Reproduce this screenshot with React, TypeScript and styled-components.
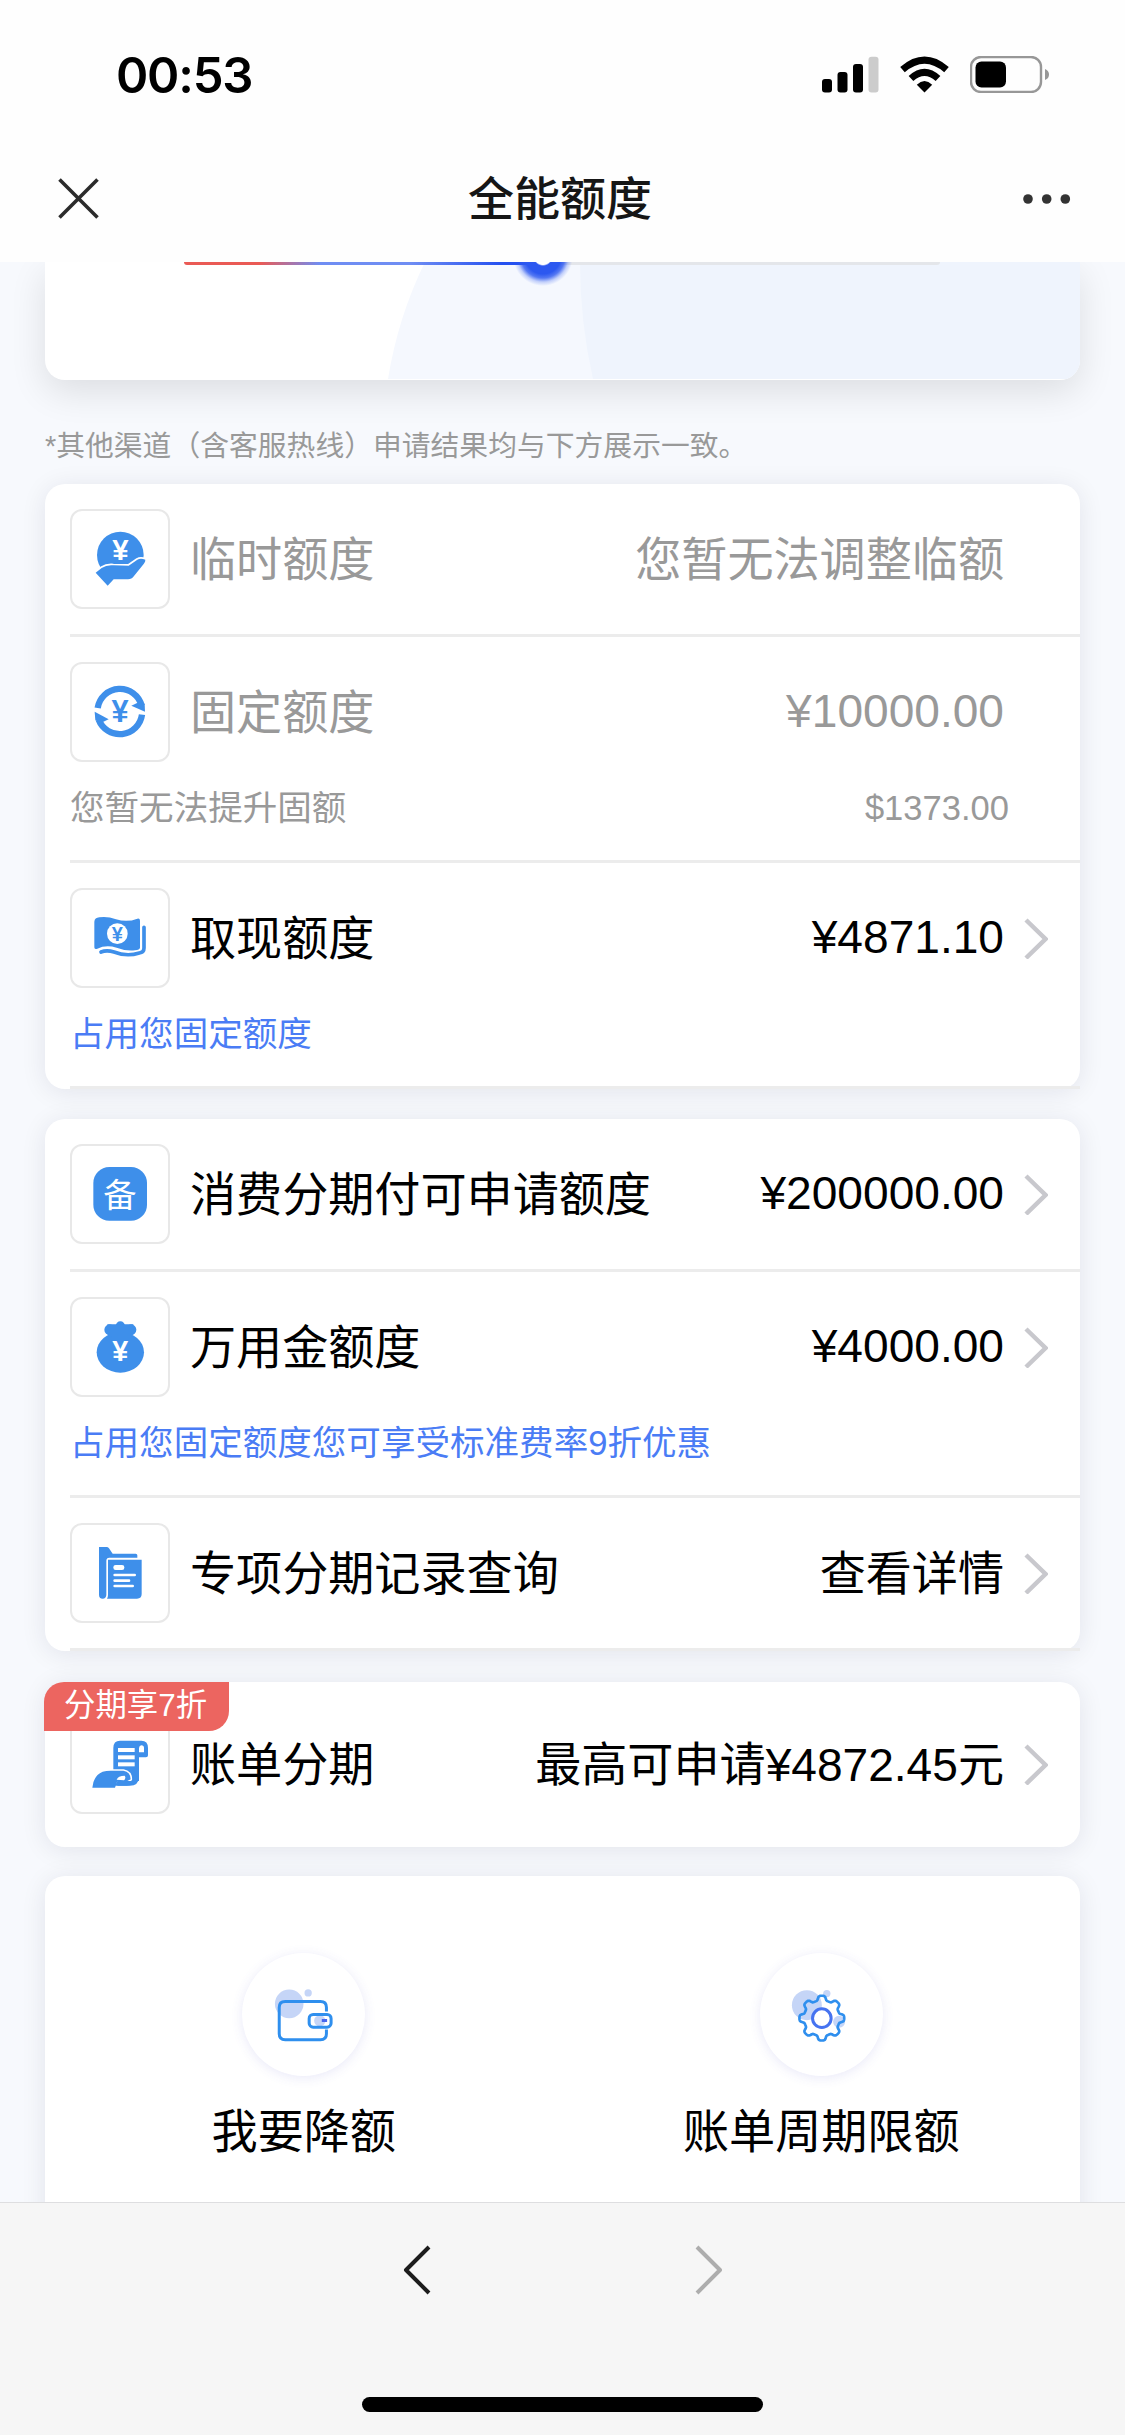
import React from "react";
import styled, { createGlobalStyle } from "styled-components";

const BLUE = "#3e8fea";
const FONT = `"Liberation Sans", "Noto Sans CJK SC", sans-serif`;
const CJK = `"Noto Sans CJK SC", sans-serif`;

const GlobalStyle = createGlobalStyle`
  * { box-sizing: border-box; }
  body { margin: 0; background: #f7f8fc; }
  svg { display: block; flex: none; }
`;

const Screen = styled.div`
  display: flex;
  flex-direction: column;
  width: 1125px;
  height: 2435px;
  overflow: hidden;
  background: #f7f9fd;
  font-family: ${FONT};
  color: #000;
`;

const StatusBar = styled.header`
  flex: none;
  display: flex;
  justify-content: space-between;
  height: 132px;
  padding: 44px 75px 0 116px;
  background: #fefefe;
`;

const Clock = styled.time`
  font: 600 49px/63px Inter, sans-serif;
  letter-spacing: -1.2px;
`;

const StatusIcons = styled.div`
  display: flex;
  gap: 21px;
  padding-top: 12px;
`;

const NavBar = styled.nav`
  flex: none;
  display: flex;
  justify-content: space-between;
  align-items: center;
  height: 130px;
  padding: 3px 54px 0 58px;
  background: #fefefe;
`;

const Title = styled.h1`
  margin: -7px 0 0 -2px;
  font: 500 46px/64px ${CJK};
  color: #161616;
`;

const Content = styled.main`
  flex: 1;
  min-height: 0;
  overflow: hidden;
  padding: 0 45px;
`;

const Hero = styled.section`
  position: relative;
  height: 118px;
  border-radius: 0 0 20px 20px;
  background: #fff;
  box-shadow: 0 12px 36px rgba(0, 0, 0, 0.11);
`;

const HeroArt = styled.svg`
  border-radius: 0 0 20px 20px;
`;

const Track = styled.div`
  position: absolute;
  top: 0;
  left: 139px;
  width: 756px;
  height: 3px;
  border-radius: 0 0 3px 3px;
  background: linear-gradient(90deg, #ea5a55 0 10%, #6f8df3 18% 30%, #2450f0 42% 48%, #e4e6ea 48%);
`;

const ThumbClip = styled.div`
  position: absolute;
  top: 0;
  left: 458px;
  width: 80px;
  height: 40px;
  overflow: hidden;
`;

const Thumb = styled.div`
  width: 62px;
  height: 62px;
  margin: -37px auto 0;
  border-radius: 50%;
  background: radial-gradient(circle at 50% 50%, #fff 0 8.5px, #2c58f0 10px 18px, rgba(44, 88, 240, 0.8) 22px, rgba(44, 88, 240, 0.25) 26px, rgba(44, 88, 240, 0) 30px);
`;

const Note = styled.p`
  margin: 44px 0 16px;
  height: 44px;
  font-size: 28.8px;
  line-height: 45px;
  color: #999;
  white-space: nowrap;
`;

const Card = styled.section`
  position: relative;
  margin-bottom: 30px;
  border-radius: 20px;
  background: #fff;
  box-shadow: 0 3px 26px rgba(20, 20, 50, 0.09);
`;

const Item = styled.div<{ $muted?: boolean }>`
  margin-left: 25px;
  padding-top: 25px;
  border-bottom: 3px solid #ececec;
  color: ${(p) => (p.$muted ? "#999" : "#000")};
`;

const ItemMain = styled.div`
  display: flex;
  align-items: center;
  height: 100px;
  margin-bottom: 25px;
  padding-right: 32px;
  font-size: 46.1px;
  white-space: nowrap;
`;

const IconTile = styled.div`
  flex: none;
  width: 100px;
  height: 100px;
  margin-right: 20px;
  border: 2px solid #e8e8e8;
  border-radius: 12px;
`;

const TileArt = styled.svg`
  width: 100px;
  height: 100px;
  margin: -2px;
  fill: ${BLUE};
`;

const Label = styled.span`
  flex: 1;
  line-height: 64px;
  padding-top: 2px;
`;

const Value = styled.span<{ $lift?: boolean }>`
  line-height: 64px;
  padding: ${(p) => (p.$lift ? "0 1px 3px 0" : "2px 1px 0 0")};
`;

const ChevronSlot = styled.span`
  display: flex;
  justify-content: flex-end;
  width: 43px;
`;

const ItemSub = styled.div<{ $link?: boolean }>`
  display: flex;
  justify-content: space-between;
  height: 48px;
  margin: -4px 0 29px;
  padding-right: 71px;
  font-size: 34.55px;
  line-height: 50px;
  color: ${(p) => (p.$link ? "#4a7cf5" : "#999")};
`;

const BillCard = styled(Card)`
  height: 165px;
  margin: 31px 0 29px;
  padding: 32px 0 0 25px;
`;

const Badge = styled.span`
  position: absolute;
  top: 0;
  left: -1px;
  width: 185px;
  height: 49px;
  padding-left: 20px;
  border-radius: 20px 0 20px 0;
  background: #ec6560;
  color: #fff;
  font: 400 31.4px/48px ${FONT};
`;

const Shortcuts = styled(Card)`
  display: grid;
  grid-template-columns: 1fr 1fr;
  height: 400px;
  padding-top: 77px;
`;

const Shortcut = styled.div`
  display: flex;
  flex-direction: column;
  align-items: center;
  font-size: 46.1px;
  line-height: 64px;
`;

const Disc = styled.div`
  width: 123px;
  height: 123px;
  margin-bottom: 24px;
  border-radius: 50%;
  background: #fff;
  box-shadow: 0 2px 12px rgba(70, 70, 200, 0.12);
`;

const Footer = styled.footer`
  flex: none;
  display: flex;
  flex-direction: column;
  align-items: center;
  height: 233px;
  padding-top: 41px;
  border-top: 1px solid #dedee0;
  background: #f6f6f6;
`;

const Pager = styled.div`
  display: flex;
  justify-content: space-between;
  width: 320px;
`;

const HomeBar = styled.div`
  width: 401px;
  height: 15px;
  margin-top: 101px;
  border-radius: 8px;
  background: #000;
`;

type YenProps = { x: number; y: number; size: number; color: string; weight?: number };
const Yen = ({ x, y, size, color, weight = 700 }: YenProps) => (
  <text x={x} y={y} fontSize={size} fontWeight={weight} fill={color} textAnchor="middle" fontFamily="Liberation Sans">
    ¥
  </text>
);

const HandCoinIcon = () => (
  <TileArt viewBox="60 57 300 300">
    <circle cx="211" cy="195" r="70" />
    <path
      d="M137 248 L155 234 Q170 224 190 226 L236 227 L262 209 Q272 203 286 209 Q287 214 281 222 L252 258 Q245 268 234 268 H191 L173 287 Z"
      stroke="#fff"
      strokeWidth="10"
      strokeLinejoin="round"
      paintOrder="stroke"
    />
    <Yen x={211} y={210} size={88} color="#fff" />
  </TileArt>
);

const CycleIcon = () => (
  <TileArt viewBox="60 515 300 300">
    <g fill="none" stroke={BLUE} strokeWidth="19">
      <path d="M143 653 A67.5 67.5 0 0 1 275 646" />
      <path d="M276 673 A67.5 67.5 0 0 1 146 688" />
    </g>
    <path d="M244 646 L266 636 L284 640 L285 664 Z" />
    <path d="M176 687 L154 697 L136 690 L134 664 Z" />
    <Yen x={210} y={696} size={92} color={BLUE} />
  </TileArt>
);

const CashIcon = () => (
  <TileArt viewBox="60 85 300 300">
    <path d="M133 186 Q134 174 148 173 Q172 169 198 179 Q232 189 262 177 Q270 175 270 183 V264 Q269 270 255 272 Q228 275 200 264 Q168 254 142 267 Q133 271 133 263 Z" />
    <path
      d="M282 203 V265 Q282 278 268 280 Q230 292 192 277 Q170 270 153 277"
      fill="none"
      stroke={BLUE}
      strokeWidth="11"
      strokeLinecap="round"
    />
    <circle cx="202" cy="222" r="31" fill="#fff" />
    <Yen x={202} y={243} size={60} color={BLUE} />
  </TileArt>
);

const ReserveIcon = () => (
  <TileArt viewBox="60 850 300 300">
    <rect x="130" y="919" width="161" height="161" rx="48" />
    <text x="210" y="1038" fontSize="100" fontWeight="400" fill="#fff" textAnchor="middle" fontFamily="Noto Sans CJK SC">
      备
    </text>
  </TileArt>
);

const PurseIcon = () => (
  <TileArt viewBox="60 52 300 300">
    <ellipse cx="211" cy="218" rx="71" ry="61" />
    <circle cx="179" cy="150" r="16" />
    <circle cx="211" cy="139" r="14" />
    <circle cx="243" cy="150" r="16" />
    <path d="M172 134 H250 V164 L240 172 L262 190 H160 L184 172 L172 164 Z" />
    <Yen x={211} y={245} size={86} color="#fff" />
  </TileArt>
);

const FolderIcon = () => (
  <TileArt viewBox="60 730 300 300">
    <path d="M147 802 H170 Q174 802 177 806 L188 822 H257 Q262 822 262 827 V834 H178 Q169 834 169 843 V946 Q168 957 158 957 Q147 957 147 945 Z" />
    <path d="M174 840 H275 V943 Q275 957 261 957 H171 Q174 952 174 946 Z" />
    <g fill="#fff">
      <rect x="190" y="856" width="33" height="15" rx="7" />
      <rect x="190" y="882" width="68" height="8" rx="4" />
      <rect x="190" y="899" width="51" height="8" rx="4" />
      <rect x="190" y="915" width="62" height="8" rx="4" />
    </g>
  </TileArt>
);

const BillIcon = () => (
  <TileArt viewBox="120 160 300 300">
    <path d="M270 240 H334 Q354 240 354 262 V284 Q354 290 348 290 H327 V348 Q327 375 300 375 H250 V262 Q250 240 270 240 Z" />
    <g fill="#fff">
      <rect x="264" y="262" width="50" height="12" />
      <rect x="264" y="284" width="50" height="12" />
      <rect x="264" y="305" width="50" height="12" />
      <path d="M327 275 V262 Q328 254 334 254 Q342 254 342 262 V275 Z" />
    </g>
    <path
      d="M187 381 Q190 345 218 333 Q228 330 242 330 H280 Q302 334 302 356 L292 361 H262 L255 381 Z"
      stroke="#fff"
      strokeWidth="9"
      strokeLinejoin="round"
      paintOrder="stroke"
    />
    <path d="M285 361 H327 V348 L310 344 Q312 375 290 375 H255 L262 361 Z" />
    <path d="M260 357 Q264 345 284 345 Q289 352 282 359 Z" fill="#fff" />
  </TileArt>
);

const WalletIcon = () => (
  <svg width="123" height="123" viewBox="37 40 370 370" fill="none" stroke="#2f8fee" strokeWidth="9">
    <g fill="#c5d5f7" stroke="none">
      <circle cx="179" cy="193" r="43" />
      <circle cx="236" cy="160" r="11" />
      <circle cx="271" cy="244" r="17" />
    </g>
    <path d="M291 216 V204 Q291 186 273 186 H167 Q149 186 149 204 V283 Q149 301 167 301 H273 Q291 301 291 283 V270" />
    <rect x="239" y="225" width="66" height="38" rx="12" />
    <path d="M277 243 H293" stroke="#4767ee" />
  </svg>
);

const gearPath =
  Array.from({ length: 181 }, (_, i) => {
    const a = (i * Math.PI) / 90;
    const r = 60.5 + 7 * Math.tanh(2.2 * Math.cos(8 * a));
    return `${i ? "L" : "M"}${(232 + r * Math.sin(a)).toFixed(1)} ${(236 - r * Math.cos(a)).toFixed(1)}`;
  }).join(" ") + "Z";

const GearIcon = () => (
  <svg width="123" height="123" viewBox="46 40 370 370" fill="none" stroke="#2f8fee" strokeWidth="8">
    <g fill="#c5d5f7" stroke="none">
      <circle cx="187" cy="197" r="45" />
      <circle cx="247" cy="162" r="11" />
      <circle cx="284" cy="247" r="18" />
    </g>
    <path d={gearPath} strokeLinejoin="round" />
    <circle cx="232" cy="236" r="28" fill="#fff" stroke="#4673f0" strokeWidth="9" />
  </svg>
);

const Chevron = () => (
  <ChevronSlot>
    <svg width="24" height="42" viewBox="0 0 24 42" fill="none" stroke="#c8c8cd" strokeWidth="4.5">
      <path d="M2 3 L21.5 22 L2 41" />
    </svg>
  </ChevronSlot>
);

type RowProps = {
  icon: React.ReactNode;
  label: string;
  value: string;
  arrow?: boolean;
};

const RowMain = ({ icon, label, value, arrow }: RowProps) => (
  <ItemMain>
    <IconTile>{icon}</IconTile>
    <Label>{label}</Label>
    <Value $lift={value.startsWith("¥")}>{value}</Value>
    {arrow ? <Chevron /> : <ChevronSlot />}
  </ItemMain>
);

export default function App() {
  return (
    <Screen>
      <GlobalStyle />
      <StatusBar>
        <Clock>00:53</Clock>
        <StatusIcons>
          <svg width="57" height="37" viewBox="0 0 57 37">
            <rect x="0" y="23" width="10" height="13.5" rx="3" />
            <rect x="15.5" y="16" width="10" height="20.5" rx="3" />
            <rect x="31" y="8" width="10" height="28.5" rx="3" />
            <rect x="46.5" y="0.7" width="10" height="35.8" rx="3" fill="#ccc" />
          </svg>
          <svg width="49" height="37" viewBox="0 0 49 37">
            <path d="M24.5 36.5 L16.8 28.7 Q24.5 21.5 32.2 28.7 Z" />
            <g fill="none" stroke="#000" strokeWidth="7">
              <path d="M11 22.5 Q24.5 10.2 38 22.5" />
              <path d="M2.5 13.7 Q24.5 -5.3 46.5 13.7" />
            </g>
          </svg>
          <svg width="80" height="37" viewBox="0 0 80 37">
            <rect x="1" y="1" width="70" height="35" rx="10" fill="none" stroke="#979797" strokeWidth="2.4" />
            <rect x="5.5" y="5.5" width="30.5" height="26" rx="6" />
            <path d="M75 13 Q79 14.5 79 18.5 Q79 22.5 75 24 Z" fill="#979797" />
          </svg>
        </StatusIcons>
      </StatusBar>
      <NavBar>
        <svg width="41" height="41" viewBox="0 0 41 41" stroke="#2b2b2b" strokeWidth="3.6">
          <path d="M1.5 1.5 L39.5 39.5 M39.5 1.5 L1.5 39.5" />
        </svg>
        <Title>全能额度</Title>
        <svg width="48" height="10" viewBox="0 0 48 10" fill="#333">
          <circle cx="5" cy="5" r="4.8" />
          <circle cx="23.7" cy="5" r="4.8" />
          <circle cx="42.3" cy="5" r="4.8" />
        </svg>
      </NavBar>

      <Content>
        <Hero>
          <HeroArt width="1035" height="118" viewBox="0 0 1035 118">
            <path d="M380 0 Q353 55 343 117 H1035 V0 Z" fill="#f5f8fe" />
            <path d="M535 0 Q535 60 548 117 H1035 V0 Z" fill="#eff4fd" />
          </HeroArt>
          <Track />
          <ThumbClip>
            <Thumb />
          </ThumbClip>
        </Hero>
        <Note>*其他渠道（含客服热线）申请结果均与下方展示一致。</Note>

        <Card>
          <Item $muted>
            <RowMain icon={<HandCoinIcon />} label="临时额度" value="您暂无法调整临额" />
          </Item>
          <Item $muted>
            <RowMain icon={<CycleIcon />} label="固定额度" value="¥10000.00" />
            <ItemSub>
              <span>您暂无法提升固额</span>
              <span>$1373.00</span>
            </ItemSub>
          </Item>
          <Item>
            <RowMain icon={<CashIcon />} label="取现额度" value="¥4871.10" arrow />
            <ItemSub $link>占用您固定额度</ItemSub>
          </Item>
        </Card>

        <Card>
          <Item>
            <RowMain icon={<ReserveIcon />} label="消费分期付可申请额度" value="¥200000.00" arrow />
          </Item>
          <Item>
            <RowMain icon={<PurseIcon />} label="万用金额度" value="¥4000.00" arrow />
            <ItemSub $link>占用您固定额度您可享受标准费率9折优惠</ItemSub>
          </Item>
          <Item>
            <RowMain icon={<FolderIcon />} label="专项分期记录查询" value="查看详情" arrow />
          </Item>
        </Card>

        <BillCard>
          <RowMain icon={<BillIcon />} label="账单分期" value="最高可申请¥4872.45元" arrow />
          <Badge>分期享7折</Badge>
        </BillCard>

        <Shortcuts>
          <Shortcut>
            <Disc>
              <WalletIcon />
            </Disc>
            我要降额
          </Shortcut>
          <Shortcut>
            <Disc>
              <GearIcon />
            </Disc>
            账单周期限额
          </Shortcut>
        </Shortcuts>
      </Content>

      <Footer>
        <Pager>
          <svg width="28" height="52" viewBox="0 0 28 52" fill="none" stroke="#1c1c1c" strokeWidth="4" strokeLinejoin="round">
            <path d="M26 3 L3 26 L26 49" />
          </svg>
          <svg width="28" height="52" viewBox="0 0 28 52" fill="none" stroke="#adadad" strokeWidth="4" strokeLinejoin="round">
            <path d="M2 3 L25 26 L2 49" />
          </svg>
        </Pager>
        <HomeBar />
      </Footer>
    </Screen>
  );
}
